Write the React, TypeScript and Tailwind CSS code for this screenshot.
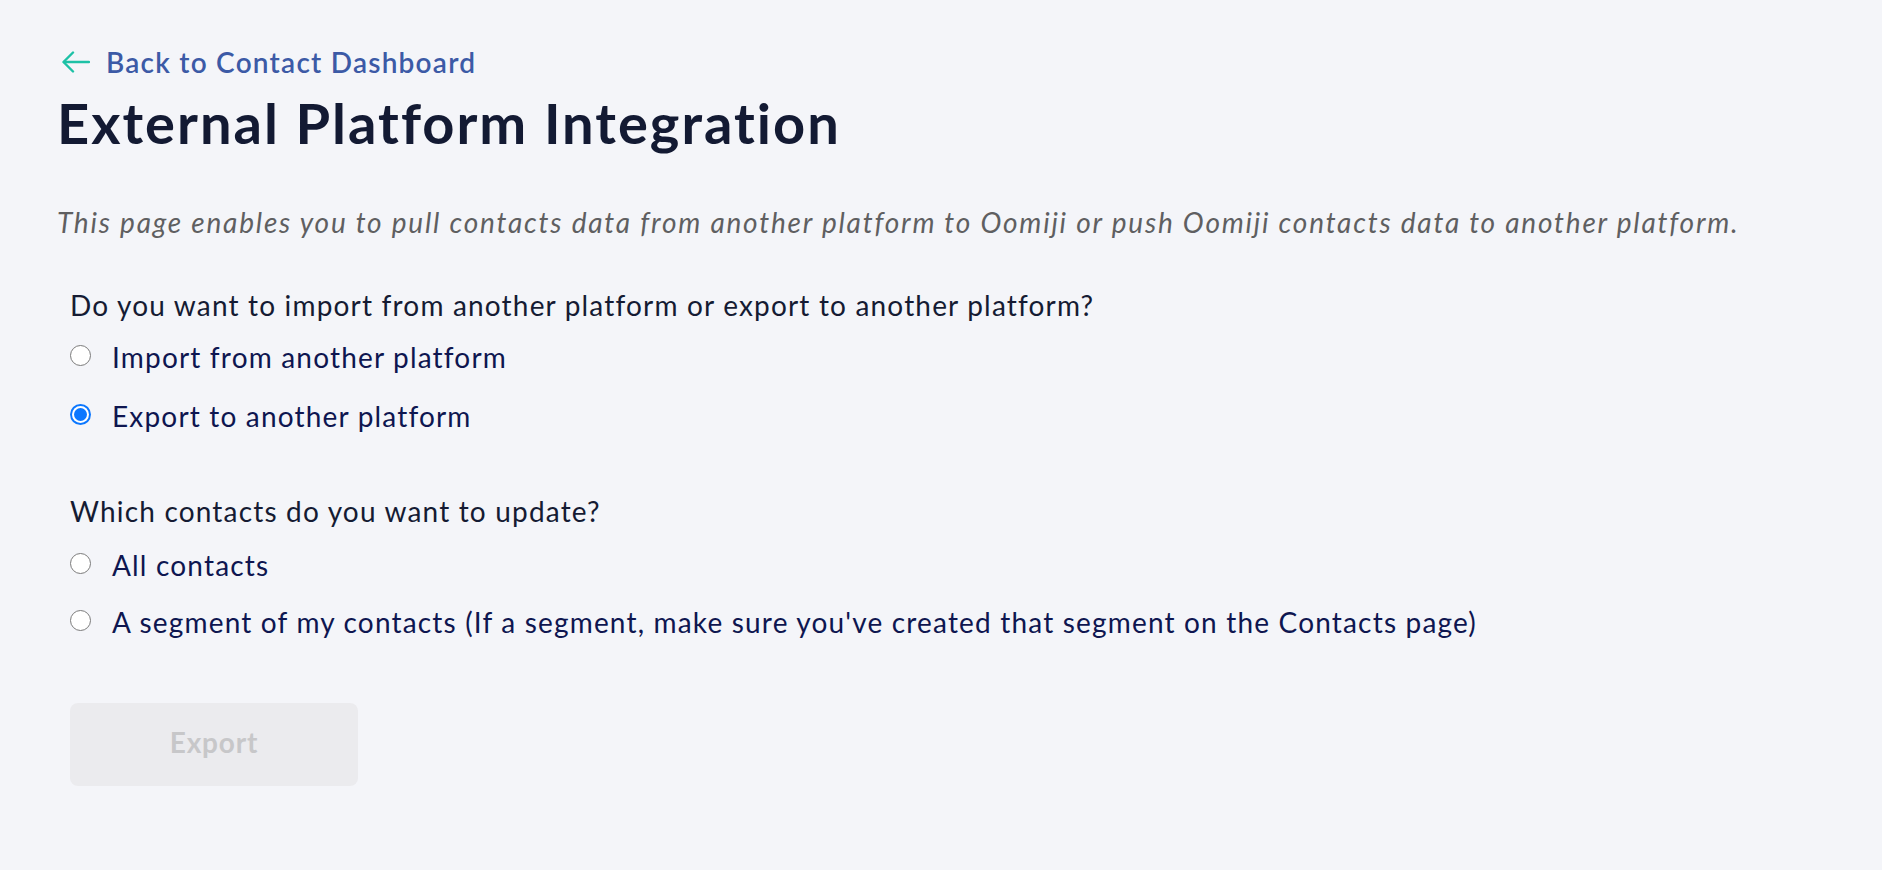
import { useState } from "react"

type Option = {
    key: string
    label: string
}

const directionOptions: Array<Option> = [
    { key: "import", label: "Import from another platform" },
    { key: "export", label: "Export to another platform" },
]

const contactOptions: Array<Option> = [
    { key: "all", label: "All contacts" },
    { key: "segment", label: "A segment of my contacts (If a segment, make sure you've created that segment on the Contacts page)" },
]

function RadioRow(props: { option: Option, checked: boolean, onSelect: () => void, className?: string }) {
    return (
        <label
            className={"flex items-center gap-[21px] cursor-pointer h-[32px] " + (props.className ?? "")}
            onClick={props.onSelect}
        >
            {props.checked ? (
                <span className="w-[21px] h-[21px] rounded-full bg-[#0b77ff] flex items-center justify-center shrink-0 -mt-[3px]">
                    <span className="w-[17px] h-[17px] rounded-full bg-white flex items-center justify-center">
                        <span className="w-[13px] h-[13px] rounded-full bg-[#0b77ff]" />
                    </span>
                </span>
            ) : (
                <span className="w-[21px] h-[21px] rounded-full bg-white border border-[#7b7b7b] shrink-0 -mt-[3px]" />
            )}
            <span className="text-[28px] leading-[32px] tracking-[0.042em] text-[#0e1650]">{props.option.label}</span>
        </label>
    )
}

export default function App() {

    const [direction, setDirection] = useState("export")
    const [contacts, setContacts] = useState<string | null>(null)

    return (
        <div className="min-h-screen w-full bg-[#f4f5f9] font-['Lato',sans-serif] pl-[59px] pt-[46px]">
            <a href="#" className="flex items-center gap-[16px] pl-[3px] w-fit">
                <svg width="28" height="22" viewBox="0 0 28 22" fill="none" stroke="#1dc1a6" strokeWidth="2.4" strokeLinecap="round" strokeLinejoin="round">
                    <path d="M27 11H2" />
                    <path d="M11 1.5L1.5 11L11 20.5" />
                </svg>
                <span className="text-[28px] leading-[32px] tracking-[0.044em] font-semibold text-[#3c5aa6]">Back to Contact Dashboard</span>
            </a>

            <h1 className="mt-[11px] -ml-[2px] text-[56px] leading-[68px] tracking-[0.036em] font-bold text-[#131a33]">External Platform Integration</h1>

            <p className="mt-[49px] -ml-[2px] text-[28px] leading-[32px] tracking-[0.064em] italic text-[#5f5f61]">
                This page enables you to pull contacts data from another platform to Oomiji or push Oomiji contacts data to another platform.
            </p>

            <div className="pl-[11px]">
                <p className="mt-[51px] text-[28px] leading-[32px] tracking-[0.042em] text-[#151b33]">
                    Do you want to import from another platform or export to another platform?
                </p>
                <div className="flex flex-col">
                    {directionOptions.map((option, index) => (
                        <RadioRow
                            key={option.key}
                            option={option}
                            checked={direction === option.key}
                            onSelect={() => setDirection(option.key)}
                            className={index === 0 ? "mt-[20px]" : "mt-[27px]"}
                        />
                    ))}
                </div>

                <p className="mt-[63px] text-[28px] leading-[32px] tracking-[0.042em] text-[#151b33]">
                    Which contacts do you want to update?
                </p>
                <div className="flex flex-col">
                    {contactOptions.map((option, index) => (
                        <RadioRow
                            key={option.key}
                            option={option}
                            checked={contacts === option.key}
                            onSelect={() => setContacts(option.key)}
                            className={index === 0 ? "mt-[22px]" : "mt-[25px]"}
                        />
                    ))}
                </div>

                <button
                    disabled={contacts === null}
                    className="mt-[65px] w-[288px] h-[83px] pb-[6px] rounded-[8px] bg-[#ebebee] text-[28px] tracking-[0.03em] font-bold text-[#c7c7c9] disabled:cursor-not-allowed"
                >
                    Export
                </button>
            </div>
        </div>
    )
}
